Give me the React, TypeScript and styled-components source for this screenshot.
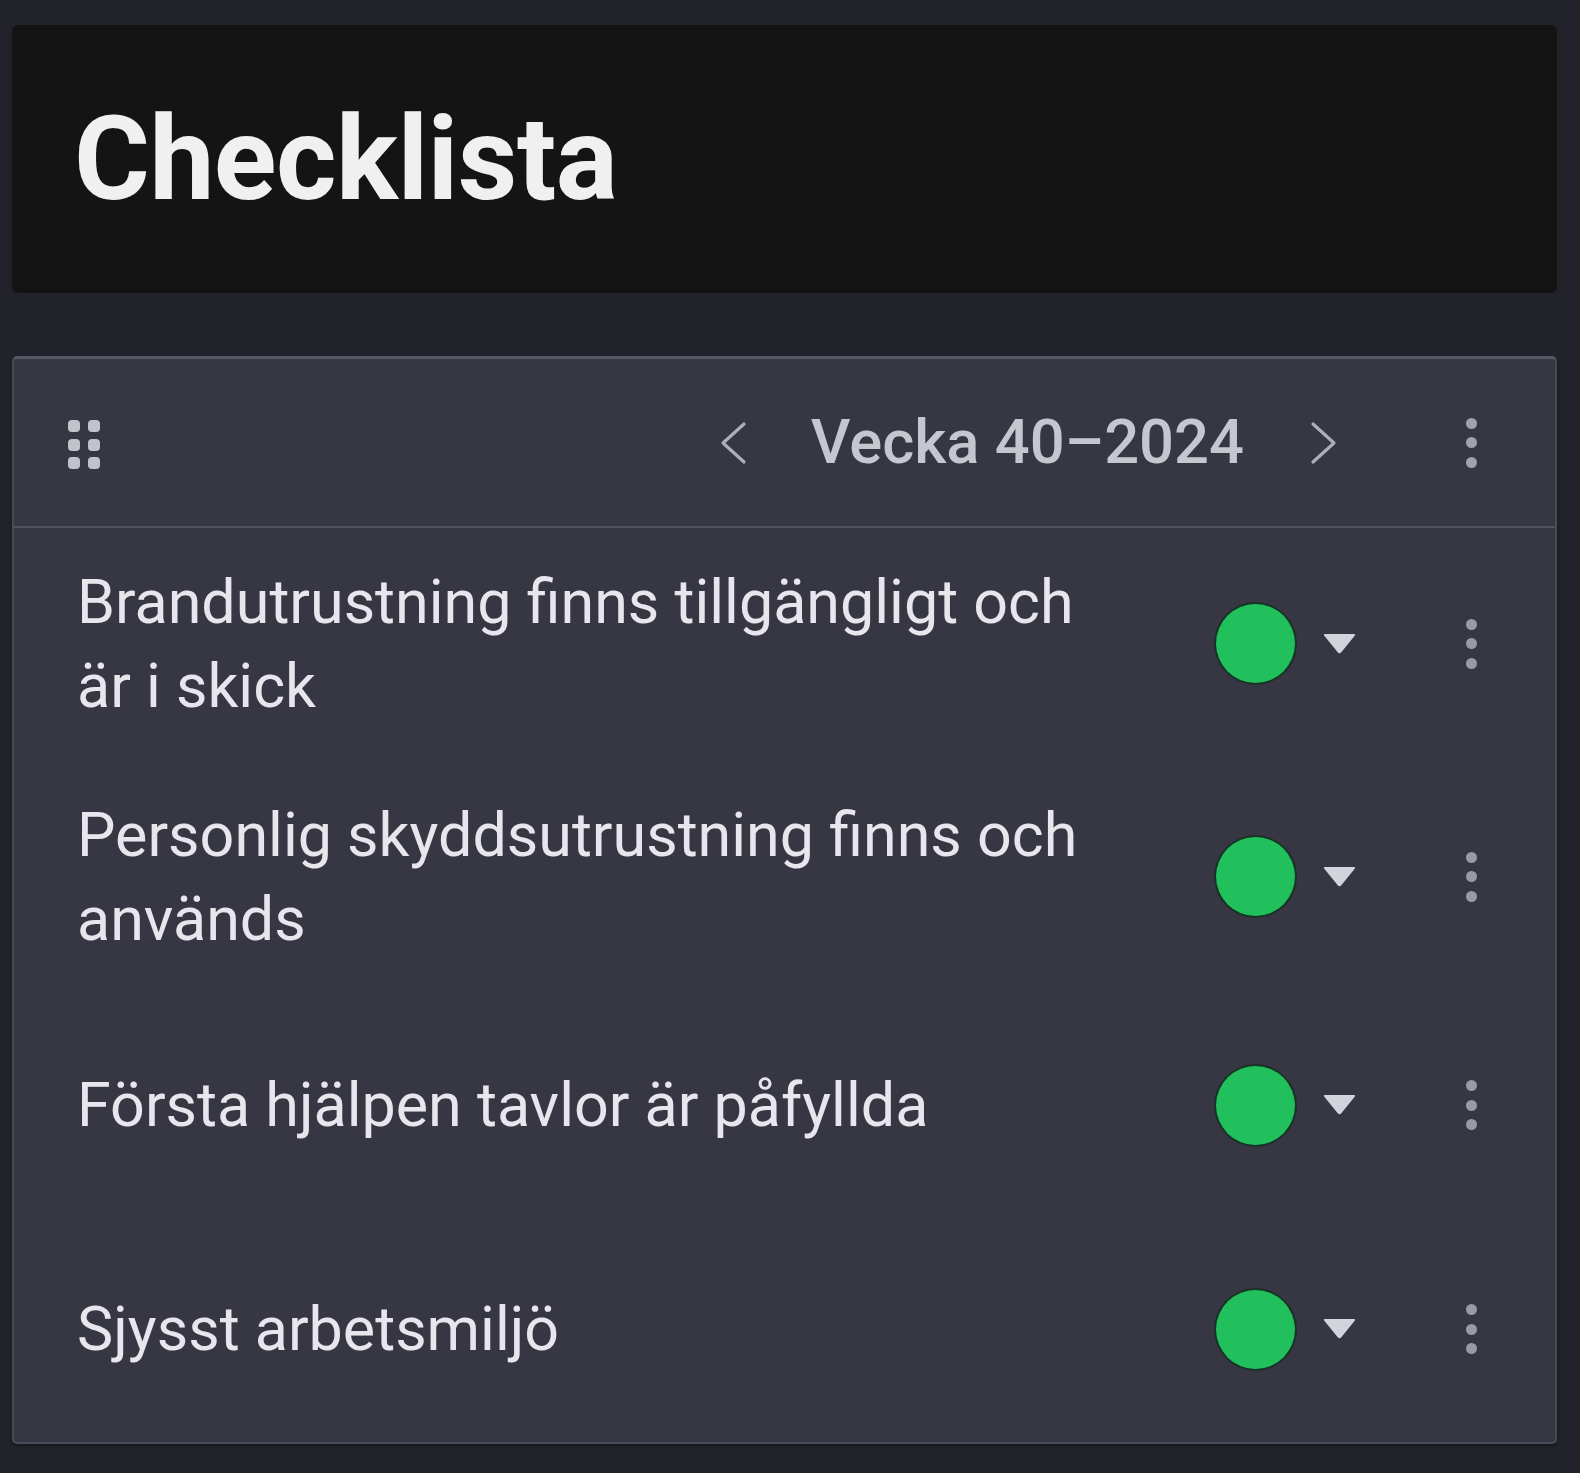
import React from "react";
import styled, { createGlobalStyle } from "styled-components";

const Global = createGlobalStyle`
  html, body {
    margin: 0;
    padding: 0;
    background: #22222b;
  }
  body {
    font-family: Roboto, "Noto Sans", "Liberation Sans", sans-serif;
    -webkit-font-smoothing: antialiased;
  }
`;

const Page = styled.div`
  width: 1580px;
  min-height: 1473px;
  box-sizing: border-box;
  padding: 25px 23px 0 12px;
  display: flex;
  flex-direction: column;
  gap: 63px;
`;

const TitleBar = styled.header`
  height: 268px;
  background: #141415;
  border-radius: 6px;
  display: flex;
  align-items: center;
  padding-left: 62px;
  box-sizing: border-box;
`;

const Title = styled.h1`
  margin: 0;
  font-family: Roboto, "Liberation Sans", sans-serif;
  font-weight: 700;
  font-size: 116px;
  line-height: 1;
  color: #f0f0f0;
  letter-spacing: -0.5px;
`;

const Card = styled.section`
  background: #373743;
  border: 2px solid #4a4a56;
  border-top: 3px solid #585864;
  border-radius: 5px;
  box-shadow: 0 2px 3px rgba(0, 0, 0, 0.35);
  display: flex;
  flex-direction: column;
`;

const CardHeader = styled.div`
  height: 167px;
  border-bottom: 2px solid #52525e;
  display: flex;
  align-items: center;
  padding: 0 64px 0 54px;
`;

const Handle = styled.div`
  display: grid;
  grid-template-columns: repeat(2, 12px);
  grid-auto-rows: 12px;
  column-gap: 8px;
  row-gap: 6.5px;
  margin-top: 4px;
`;

const Dot = styled.span`
  width: 12px;
  height: 12px;
  border-radius: 4px;
  background: #c2c2ca;
`;

const Nav = styled.div`
  margin-left: auto;
  display: flex;
  align-items: center;
`;

const NavButton = styled.button`
  background: none;
  border: 0;
  padding: 0;
  width: 28px;
  height: 44px;
  display: flex;
  align-items: center;
  justify-content: center;
  cursor: pointer;
`;

const WeekLabel = styled.span`
  font-family: Roboto, "Liberation Sans", sans-serif;
  font-weight: 500;
  font-size: 61.5px;
  line-height: 1;
  color: #c6c6cf;
  margin: 0 66px 0 64px;
  white-space: nowrap;
`;

const Kebab = styled.button<{ $c: string }>`
  background: none;
  border: 0;
  padding: 0;
  width: 40px;
  height: 60px;
  display: flex;
  flex-direction: column;
  align-items: center;
  justify-content: center;
  gap: 8.5px;
  cursor: pointer;
  span {
    width: 11px;
    height: 11px;
    border-radius: 50%;
    background: ${(p) => p.$c};
  }
`;

const HeaderKebab = styled(Kebab)`
  margin-left: 113px;
`;

const Row = styled.div<{ $h: number }>`
  height: ${(p) => p.$h}px;
  display: flex;
  align-items: center;
  padding: 0 64px 0 63px;
`;

const ItemText = styled.div`
  flex: 1;
  max-width: 1040px;
  font-family: Roboto, "Liberation Sans", sans-serif;
  font-size: 61px;
  line-height: 84px;
  color: #e6e6ec;
`;

const Status = styled.div`
  margin-left: auto;
  display: flex;
  align-items: center;
`;

const Circle = styled.span<{ $color: string }>`
  width: 79px;
  height: 79px;
  border-radius: 50%;
  background: ${(p) => p.$color};
  box-shadow: 0 0 0 2px rgba(10, 50, 25, 0.7);
`;

const CaretButton = styled.button`
  background: none;
  border: 0;
  padding: 0;
  margin-left: 27px;
  width: 35px;
  height: 24px;
  display: flex;
  cursor: pointer;
`;

const RowKebab = styled(Kebab)`
  margin-left: 94px;
`;

const ChevronLeft = () => (
  <svg width="28" height="44" viewBox="0 0 28 44">
    <polyline points="25,3 4,22 25,41" fill="none" stroke="#aeaeb8" strokeWidth="3.2" strokeLinecap="round" strokeLinejoin="round" />
  </svg>
);

const ChevronRight = () => (
  <svg width="28" height="44" viewBox="0 0 28 44">
    <polyline points="3,3 24,22 3,41" fill="none" stroke="#aeaeb8" strokeWidth="3.2" strokeLinecap="round" strokeLinejoin="round" />
  </svg>
);

const Caret = () => (
  <svg width="35" height="24" viewBox="0 0 35 24">
    <path d="M3 2 H32 Q34 2 32.5 4 L19.5 20 Q17.5 22.5 15.5 20 L2.5 4 Q1 2 3 2 Z" fill="#d3d3db" />
  </svg>
);

const items = [
  { text: "Brandutrustning finns tillgängligt och är i skick", h: 231 },
  { text: "Personlig skyddsutrustning finns och används", h: 235 },
  { text: "Första hjälpen tavlor är påfyllda", h: 222 },
  { text: "Sjysst arbetsmiljö", h: 226 },
];

export default function App() {
  return (
    <>
      <Global />
      <Page>
        <TitleBar>
          <Title>Checklista</Title>
        </TitleBar>
        <Card>
          <CardHeader>
            <Handle>
              {Array.from({ length: 6 }).map((_, i) => (
                <Dot key={i} />
              ))}
            </Handle>
            <Nav>
              <NavButton aria-label="Föregående vecka">
                <ChevronLeft />
              </NavButton>
              <WeekLabel>Vecka 40–2024</WeekLabel>
              <NavButton aria-label="Nästa vecka">
                <ChevronRight />
              </NavButton>
            </Nav>
            <HeaderKebab $c="#a2a2ac" aria-label="Meny">
              <span />
              <span />
              <span />
            </HeaderKebab>
          </CardHeader>
          {items.map((it) => (
            <Row key={it.text} $h={it.h}>
              <ItemText>{it.text}</ItemText>
              <Status>
                <Circle $color="#22c05c" />
                <CaretButton aria-label="Välj status">
                  <Caret />
                </CaretButton>
                <RowKebab $c="#9a9aa4" aria-label="Meny">
                  <span />
                  <span />
                  <span />
                </RowKebab>
              </Status>
            </Row>
          ))}
        </Card>
      </Page>
    </>
  );
}
